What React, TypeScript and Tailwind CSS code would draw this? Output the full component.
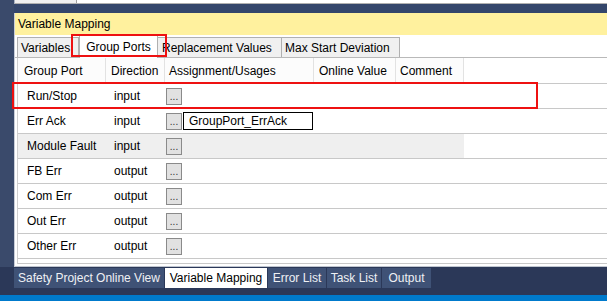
import React from "react";

const rows = [
  { port: "Run/Stop", dir: "input" },
  { port: "Err Ack", dir: "input", text: "GroupPort_ErrAck" },
  { port: "Module Fault", dir: "input", gray: true },
  { port: "FB Err", dir: "output" },
  { port: "Com Err", dir: "output" },
  { port: "Out Err", dir: "output" },
  { port: "Other Err", dir: "output" },
  { port: "", dir: "", empty: true },
];

function Dots({ empty }: { empty?: boolean }) {
  return (
    <div className="w-[16px] h-[17px] bg-[#e1e1e1] border border-[#8a8a8a] flex items-end justify-center leading-none text-[10px] text-[#333] pb-[2px]">
      {empty ? "" : "..."}
    </div>
  );
}

export default function App() {
  return (
    <div
      className="w-[607px] h-[301px] bg-[#34446a] flex flex-col overflow-hidden relative text-[12px] text-black"
      style={{ fontFamily: '"Liberation Sans", Arial, sans-serif' }}
    >
      <div className="flex h-[267px] shrink-0">
        <div className="w-[14px] shrink-0 bg-[#3a4a6b]" />
        <div className="flex-1 flex flex-col min-h-0">
          {/* top strip */}
          <div className="h-[4px] shrink-0 flex border-l border-[#a9b2c3] bg-white border-b border-b-[#b0b0b0]">
            <div className="w-[62px] bg-[#f0f0f0] border-r border-[#a0a0a0]" />
          </div>
          <div className="h-[9px] shrink-0 bg-[#34466b]" />
          {/* panel */}
          <div className="flex-1 min-h-0 flex flex-col bg-white border-l border-[#c9ced8] relative">
            <div className="h-[22px] bg-[#fff19e] flex items-center pl-[3px] shrink-0">
              Variable Mapping
            </div>
            {/* tabs */}
            <div className="h-[23px] flex items-end pl-[2px] border-b border-[#b9b9b9] shrink-0 relative">
              <div className="h-[20px] w-[62px] bg-[#f0f0f0] border border-b-0 border-[#b0b0b0] flex items-center pl-[3px] overflow-hidden whitespace-nowrap">
                Variables
              </div>
              <div className="h-[23px] w-[79px] bg-white border border-b-0 border-[#b0b0b0] flex items-center justify-center -mb-[1px] relative z-10">
                Group Ports
              </div>
              <div className="h-[20px] w-[124px] bg-[#f0f0f0] border border-l-0 border-b-0 border-[#b0b0b0] flex items-center pl-[4px] whitespace-nowrap">
                Replacement Values
              </div>
              <div className="h-[20px] w-[118px] bg-[#f0f0f0] border border-l-0 border-b-0 border-[#b0b0b0] flex items-center pl-[3px] whitespace-nowrap">
                Max Start Deviation
              </div>
              <div className="absolute left-[56px] top-[-1px] w-[96px] h-[23px] border-2 border-[#ee1111] z-20" />
            </div>
            {/* grid */}
            <div className="ml-[2px] border-l border-[#cfcfcf] flex-1 min-h-0 flex flex-col overflow-hidden relative">
              <div className="h-[26px] shrink-0 flex border-b border-[#c8c8c8] bg-[#fcfcfc]">
                <div className="w-[88px] border-r border-[#e2e2e2] flex items-center pl-[6px]">Group Port</div>
                <div className="w-[59px] border-r border-[#e2e2e2] flex items-center pl-[5px]">Direction</div>
                <div className="w-[149px] border-r border-[#e2e2e2] flex items-center pl-[4px]">Assignment/Usages</div>
                <div className="w-[82px] border-r border-[#e2e2e2] flex items-center pl-[5px]">Online Value</div>
                <div className="w-[68px] border-r border-[#e2e2e2] flex items-center pl-[4px]">Comment</div>
                <div className="flex-1 bg-white" />
              </div>
              {rows.map((r, i) => (
                <div key={i} className="h-[25px] shrink-0 flex border-b border-[#c8c8c8]">
                  <div className={`w-[446px] flex ${r.gray ? "bg-[#efefef]" : "bg-white"}`}>
                    <div className="w-[88px] flex items-center pl-[9px]">{r.port}</div>
                    <div className="w-[59px] flex items-center pl-[8px]">{r.dir}</div>
                    <div className="flex items-center pl-[1px] gap-[1px]">
                      <Dots empty={r.empty} />
                      {r.text && (
                        <div className="w-[130px] h-[18px] border border-black bg-white flex items-center pl-[5px]">
                          {r.text}
                        </div>
                      )}
                    </div>
                  </div>
                  <div className="flex-1" />
                </div>
              ))}
              <div className="absolute left-0 right-0 top-[205px] h-[1px] bg-[#c8c8c8]" />
            </div>
            <div className="h-[3px] shrink-0 bg-white border-b border-[#c0c6d0]" />
            {/* red row highlight */}
            <div className="absolute left-[-3px] top-[69px] w-[526px] h-[27px] border-2 border-[#ee1111] z-20" />
          </div>
        </div>
      </div>
      {/* bottom tabs */}
      <div className="h-[28px] shrink-0 bg-[#2b3858] flex gap-[1px] pt-[1px] pl-[14px] items-start">
        <div className="h-[20px] w-[150px] bg-[#3f5276] text-[#eef0f4] flex items-center justify-center whitespace-nowrap">
          Safety Project Online View
        </div>
        <div className="h-[20px] w-[102px] bg-white flex items-center justify-center whitespace-nowrap">
          Variable Mapping
        </div>
        <div className="h-[20px] w-[58px] bg-[#3f5276] text-[#eef0f4] flex items-center justify-center whitespace-nowrap">
          Error List
        </div>
        <div className="h-[20px] w-[54px] bg-[#3f5276] text-[#eef0f4] flex items-center justify-center whitespace-nowrap">
          Task List
        </div>
        <div className="h-[20px] w-[49px] bg-[#3f5276] text-[#eef0f4] flex items-center justify-center whitespace-nowrap">
          Output
        </div>
      </div>
      <div className="h-[6px] shrink-0 bg-[#007acc]" />
    </div>
  );
}
